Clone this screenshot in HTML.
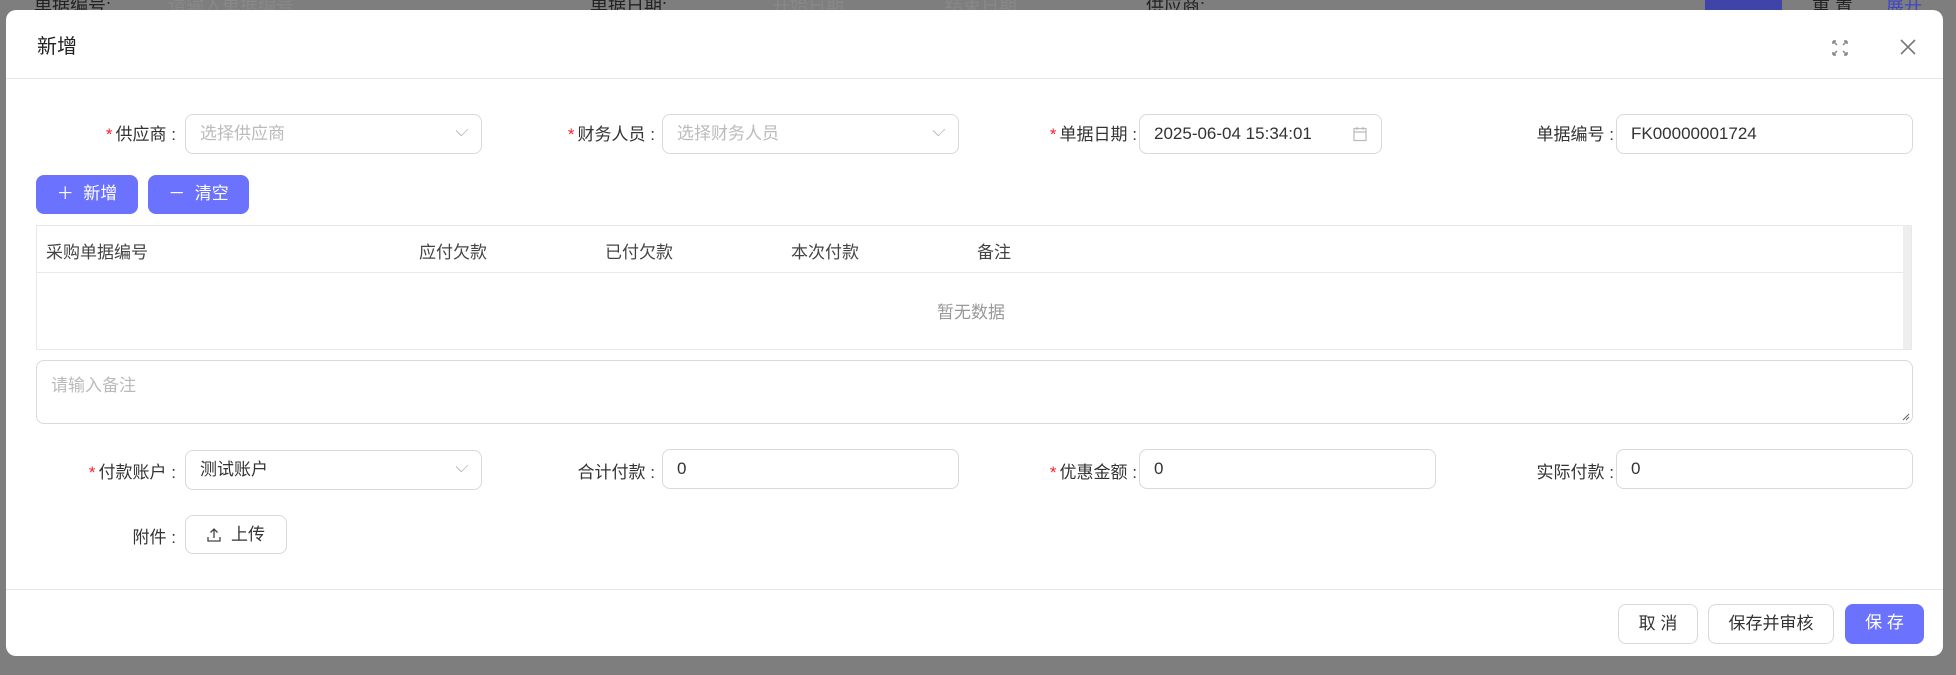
<!DOCTYPE html>
<html><head><meta charset="utf-8"><style>
*{box-sizing:border-box;margin:0;padding:0}
body{width:1956px;height:675px;background:#7e7e7e;font-family:"Liberation Sans","Noto Sans CJK SC",sans-serif;position:relative;overflow:hidden;color:#333}
.bgt{position:absolute;top:-8px;font-size:18px;color:#222;white-space:nowrap}
.modal{position:absolute;left:6px;top:10px;width:1937px;height:646px;background:#fff;border-radius:10px}
.title{position:absolute;left:31px;top:20px;font-size:20px;color:#222}
.hl{position:absolute;left:0;right:0;height:1px;background:#e6e6e6}
.lbl{position:absolute;font-size:17px;color:#333;text-align:right;white-space:nowrap}
.lbl b{color:#f5222d;font-weight:normal;margin-right:3px}
.inp{position:absolute;border:1px solid #d9d9d9;border-radius:8px;height:40px;font-size:17px;line-height:38px;padding-left:14px;color:#333;background:#fff}
.ph{color:#bbb}
.arr{position:absolute;right:14px;width:10px;height:10px;border-right:1.3px solid #bbb;border-bottom:1.3px solid #bbb;transform:rotate(45deg) scaleX(.8);top:10px}
.btnp{position:absolute;background:#6b72fe;color:#fff;border-radius:8px;font-size:17px;text-align:center;line-height:38px}
.btn{position:absolute;border:1px solid #d9d9d9;background:#fff;border-radius:8px;font-size:17px;text-align:center;color:#333}
.th{position:absolute;top:12px;font-size:17px;color:#444}
</style></head><body>
<div class="bgt" style="left:34px">单据编号:</div>
<div class="bgt" style="left:168px;color:#888">请输入单据编号</div>
<div class="bgt" style="left:590px">单据日期:</div>
<div class="bgt" style="left:772px;color:#888">开始日期</div>
<div class="bgt" style="left:945px;color:#888">结束日期</div>
<div class="bgt" style="left:1146px">供应商:</div>
<div style="position:absolute;left:1705px;top:0;width:77px;height:10px;background:#3f45a8"></div>
<div class="bgt" style="left:1812px">重 置</div>
<div class="bgt" style="left:1886px;color:#3f45c8">展开</div>
<div class="modal">
 <div class="title">新增</div>
 <svg style="position:absolute;left:1824px;top:28px" width="20" height="20" viewBox="0 0 20 20" fill="none" stroke="#888" stroke-width="1.5"><path d="M3 3l4 4M3 3v3M3 3h3M17 3l-4 4M17 3v3M17 3h-3M3 17l4-4M3 17v-3M3 17h3M17 17l-4-4M17 17v-3M17 17h-3"/></svg>
 <svg style="position:absolute;left:1893px;top:28px" width="18" height="18" viewBox="0 0 18 18" stroke="#777" stroke-width="1.6"><path d="M2 2l14 14M16 2L2 16"/></svg>
 <div class="hl" style="top:68px"></div>

 <div class="lbl" style="right:1767px;top:110px"><b>*</b>供应商 :</div>
 <div class="inp ph" style="left:179px;top:104px;width:297px">选择供应商<span class="arr"></span></div>
 <div class="lbl" style="right:1288px;top:110px"><b>*</b>财务人员 :</div>
 <div class="inp ph" style="left:656px;top:104px;width:297px">选择财务人员<span class="arr"></span></div>
 <div class="lbl" style="right:806px;top:110px"><b>*</b>单据日期 :</div>
 <div class="inp" style="left:1133px;top:104px;width:243px">2025-06-04 15:34:01
  <svg style="position:absolute;right:14px;top:11px" width="14" height="16" viewBox="0 0 14 16" fill="none" stroke="#bbb" stroke-width="1.2"><rect x="1" y="2.5" width="12" height="12"/><path d="M1 6h12M4 1v3M10 1v3"/></svg></div>
 <div class="lbl" style="right:329px;top:110px">单据编号 :</div>
 <div class="inp" style="left:1610px;top:104px;width:297px">FK00000001724</div>

 <div class="btnp" style="left:30px;top:165px;width:102px;height:39px">＋&nbsp; 新增</div>
 <div class="btnp" style="left:142px;top:165px;width:101px;height:39px">－&nbsp; 清空</div>

 <div style="position:absolute;left:30px;top:215px;width:1876px;height:125px;border:1px solid #e8e8e8">
  <div style="position:absolute;right:0;top:0;width:8px;height:100%;background:#eee"></div>
  <div class="th" style="left:9px">采购单据编号</div>
  <div class="th" style="left:382px">应付欠款</div>
  <div class="th" style="left:568px">已付欠款</div>
  <div class="th" style="left:754px">本次付款</div>
  <div class="th" style="left:940px">备注</div>
  <div style="position:absolute;left:0;right:8px;top:46px;height:1px;background:#e8e8e8"></div>
  <div style="position:absolute;left:900px;top:72px;font-size:17px;color:#999">暂无数据</div>
 </div>

 <div style="position:absolute;left:30px;top:350px;width:1877px;height:64px;border:1px solid #d9d9d9;border-radius:8px">
  <div style="position:absolute;left:14px;top:10px;font-size:17px;color:#bbb">请输入备注</div>
  <svg style="position:absolute;right:2px;bottom:2px" width="8" height="8" viewBox="0 0 8 8" stroke="#666" stroke-width="1"><path d="M1 7L7 1M4 7L7 4"/></svg>
 </div>

 <div class="lbl" style="right:1767px;top:448px"><b>*</b>付款账户 :</div>
 <div class="inp" style="left:179px;top:440px;width:297px">测试账户<span class="arr"></span></div>
 <div class="lbl" style="right:1288px;top:448px">合计付款 :</div>
 <div class="inp" style="left:656px;top:439px;width:297px">0</div>
 <div class="lbl" style="right:806px;top:448px"><b>*</b>优惠金额 :</div>
 <div class="inp" style="left:1133px;top:439px;width:297px">0</div>
 <div class="lbl" style="right:329px;top:448px">实际付款 :</div>
 <div class="inp" style="left:1610px;top:439px;width:297px">0</div>

 <div class="lbl" style="right:1767px;top:513px">附件 :</div>
 <div class="btn" style="left:179px;top:505px;width:102px;height:39px;line-height:37px">
  <svg style="vertical-align:-2px;margin-right:10px" width="14" height="14" viewBox="0 0 14 14" fill="none" stroke="#444" stroke-width="1.3"><path d="M7 10V1M3.5 4.5L7 1l3.5 3.5M1 9v4h12V9"/></svg>上传</div>

 <div class="hl" style="top:579px"></div>
 <div class="btn" style="left:1612px;top:594px;width:80px;height:40px;line-height:38px">取 消</div>
 <div class="btn" style="left:1702px;top:594px;width:126px;height:40px;line-height:38px">保存并审核</div>
 <div class="btnp" style="left:1839px;top:594px;width:79px;height:40px">保 存</div>
</div>
</body></html>
